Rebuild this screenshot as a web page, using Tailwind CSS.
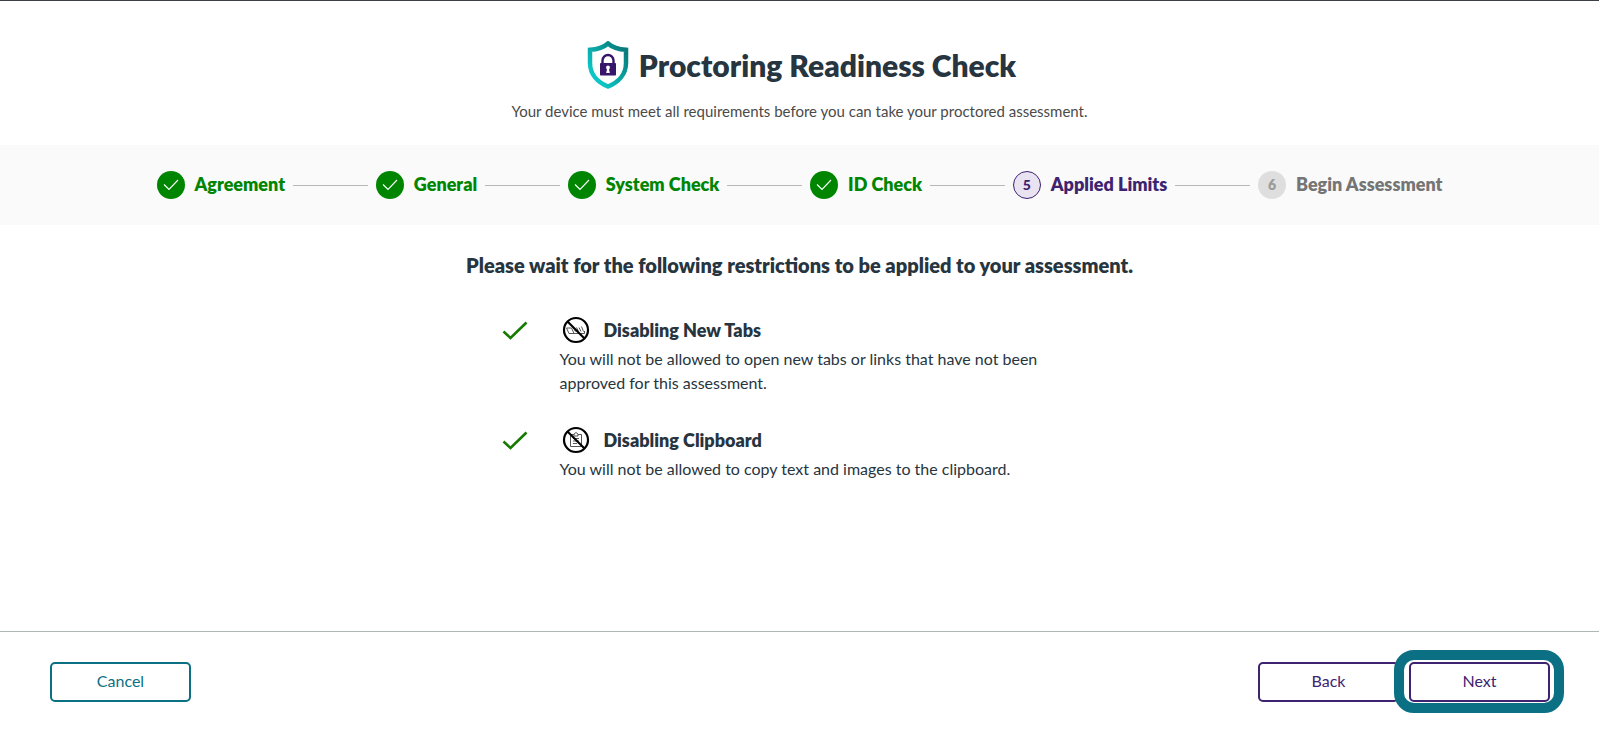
<!DOCTYPE html>
<html lang="en">

<head>
    <meta charset="UTF-8">
    <meta name="viewport" content="width=device-width, initial-scale=1.0">
    <title>Proctoring Readiness Check</title>
    <script src="https://cdn.jsdelivr.net/npm/@tailwindcss/browser@4"></script>
</head>

<body class="flex min-h-screen flex-col border-t border-[#3c3f46] bg-white font-[Lato,sans-serif] text-[#273540]">

    <header class="px-4 pt-10 pb-6 text-center">
        <div class="flex items-center justify-center gap-2.5 pl-1">
            <svg class="h-12 w-[42px] shrink-0" viewBox="0 0 42 48" aria-hidden="true">
                <defs>
                    <linearGradient id="shield" x1="0" y1="1" x2="1" y2="0">
                        <stop offset="0.2" stop-color="#0cc5c5" />
                        <stop offset="0.9" stop-color="#087b7b" />
                    </linearGradient>
                </defs>
                <path d="M21 2.5C16.500 6.500 9 8.500 3 8.800V22C3 33.500 11 41.500 21 45.500C31 41.500 39 33.500 39 22V8.800C33 8.500 25.500 6.500 21 2.500Z" fill="#fff" stroke="url(#shield)" stroke-width="4.500" />
                <path d="M15.500 23V19.500A5.500 5.500 0 0 1 26.500 19.500V23" fill="none" stroke="#37156b" stroke-width="2.400" />
                <rect x="13" y="22" width="16" height="12.500" rx="0.800" fill="#37156b" />
                <circle cx="21" cy="26.500" r="1.900" fill="#fff" />
                <path d="M20.200 27H21.800L22.800 32H19.200Z" fill="#fff" />
            </svg>
            <h1 class="text-[30px] leading-12 font-extrabold">Proctoring Readiness Check</h1>
        </div>
        <p class="mt-3 text-[15px] leading-5 text-[#4a4a4a]">Your device must meet all requirements before you can take your proctored assessment.</p>
    </header>

    <nav class="bg-[#fafafa] px-4" aria-label="Progress">
        <ol class="mx-auto flex h-20 max-w-[1286px] items-center gap-2 text-[18px] leading-6 font-extrabold text-[#008500]">
            <li class="flex items-center gap-2.5">
                <svg class="size-7 shrink-0" viewBox="0 0 28 28" aria-hidden="true"><circle cx="14" cy="14" r="14" fill="#008500" /><path d="M7 13.500L12 18.500L21 9" fill="none" stroke="#fff" stroke-width="1.100" /></svg>
                <span class="pb-0.5">Agreement</span>
            </li>
            <li class="h-px flex-1 bg-[#b5b8b8]" aria-hidden="true"></li>
            <li class="flex items-center gap-2.5">
                <svg class="size-7 shrink-0" viewBox="0 0 28 28" aria-hidden="true"><circle cx="14" cy="14" r="14" fill="#008500" /><path d="M7 13.500L12 18.500L21 9" fill="none" stroke="#fff" stroke-width="1.100" /></svg>
                <span class="pb-0.5">General</span>
            </li>
            <li class="h-px flex-1 bg-[#b5b8b8]" aria-hidden="true"></li>
            <li class="flex items-center gap-2.5">
                <svg class="size-7 shrink-0" viewBox="0 0 28 28" aria-hidden="true"><circle cx="14" cy="14" r="14" fill="#008500" /><path d="M7 13.500L12 18.500L21 9" fill="none" stroke="#fff" stroke-width="1.100" /></svg>
                <span class="pb-0.5">System Check</span>
            </li>
            <li class="h-px flex-1 bg-[#b5b8b8]" aria-hidden="true"></li>
            <li class="flex items-center gap-2.5">
                <svg class="size-7 shrink-0" viewBox="0 0 28 28" aria-hidden="true"><circle cx="14" cy="14" r="14" fill="#008500" /><path d="M7 13.500L12 18.500L21 9" fill="none" stroke="#fff" stroke-width="1.100" /></svg>
                <span class="pb-0.5">ID Check</span>
            </li>
            <li class="h-px flex-1 bg-[#b5b8b8]" aria-hidden="true"></li>
            <li class="flex items-center gap-2.5 text-[#3d2370]" aria-current="step">
                <span class="flex size-7 shrink-0 items-center justify-center rounded-full border border-[#3d2370] bg-[#e8e2f1] text-sm font-black">5</span>
                <span class="pb-0.5">Applied Limits</span>
            </li>
            <li class="h-px flex-1 bg-[#b5b8b8]" aria-hidden="true"></li>
            <li class="flex items-center gap-2.5 text-[#757575]">
                <span class="flex size-7 shrink-0 items-center justify-center rounded-full bg-[#dedede] text-sm text-[#9b9b9b]">6</span>
                <span class="pb-0.5">Begin Assessment</span>
            </li>
        </ol>
    </nav>

    <main class="flex-1 px-4 pt-7">
        <h2 class="text-center text-[20px] leading-6 font-extrabold">Please wait for the following restrictions to be applied to your assessment.</h2>

        <ul class="mx-auto mt-9 flex max-w-[596px] flex-col gap-7">
            <li class="flex items-start gap-8">
                <svg class="mt-2 h-5 w-[26px] shrink-0" viewBox="0 0 26 20" aria-hidden="true"><path d="M1.500 10.500L8.500 17L24.500 1.500" fill="none" stroke="#167a00" stroke-width="2.600" /></svg>
                <div>
                    <div class="flex h-[34px] items-center gap-3.5">
                        <svg class="ml-0.5 size-7 shrink-0" viewBox="0 0 28 28" fill="none" aria-hidden="true">
                            <path d="M4.500 12H9.500L12 17.500H22.500V15M4.500 12L7 17.500H12M11 11L13.500 15.500M14.500 11.500L16.500 15.500M17 11.500L19 15.500M19.500 10.500L21.500 15.500" stroke="#555" stroke-width="1" />
                            <circle cx="14" cy="14" r="12" stroke="#000" stroke-width="2.200" />
                            <path d="M5.500 5.500L22.500 22.500" stroke="#000" stroke-width="2.200" />
                        </svg>
                        <h3 class="text-[18px] leading-6 font-extrabold">Disabling New Tabs</h3>
                    </div>
                    <p class="text-[16px] leading-6">You will not be allowed to open new tabs or links that have not been approved for this assessment.</p>
                </div>
            </li>
            <li class="flex items-start gap-8">
                <svg class="mt-2 h-5 w-[26px] shrink-0" viewBox="0 0 26 20" aria-hidden="true"><path d="M1.500 10.500L8.500 17L24.500 1.500" fill="none" stroke="#167a00" stroke-width="2.600" /></svg>
                <div>
                    <div class="flex h-[34px] items-center gap-3.5">
                        <svg class="ml-0.5 size-7 shrink-0" viewBox="0 0 28 28" fill="none" aria-hidden="true">
                            <path d="M12 8.500H8.500V20.500H19.500V8.500H16M12 10V8L14 6.500L16 8V10ZM11 12.500H17M11 15H17M11 17.500H15" stroke="#555" stroke-width="1" />
                            <circle cx="14" cy="14" r="12" stroke="#000" stroke-width="2.200" />
                            <path d="M5.500 5.500L22.500 22.500" stroke="#000" stroke-width="2.200" />
                        </svg>
                        <h3 class="text-[18px] leading-6 font-extrabold">Disabling Clipboard</h3>
                    </div>
                    <p class="text-[16px] leading-6">You will not be allowed to copy text and images to the clipboard.</p>
                </div>
            </li>
        </ul>
    </main>

    <footer class="flex items-center justify-between border-t border-[#b0b5b5] pt-[30px] pr-[49px] pb-[29px] pl-[50px]">
        <button type="button" class="h-10 w-[141px] rounded-[5px] border-2 border-[#0c7084] pb-0.5 text-[16px] text-[#0c7084]">Cancel</button>
        <div class="flex gap-2.5">
            <button type="button" class="h-10 w-[141px] rounded-[5px] border-2 border-[#3d2370] pb-0.5 text-[16px] text-[#3d2370]">Back</button>
            <div class="relative">
                <button type="button" class="h-10 w-[141px] rounded-[5px] border-2 border-[#3d2370] pb-0.5 text-[16px] text-[#3d2370]">Next</button>
                <span class="pointer-events-none absolute -top-3 -right-3.5 -bottom-[11px] -left-[15px] rounded-[20px] border-10 border-[#0c7084]"></span>
            </div>
        </div>
    </footer>

</body>

</html>
